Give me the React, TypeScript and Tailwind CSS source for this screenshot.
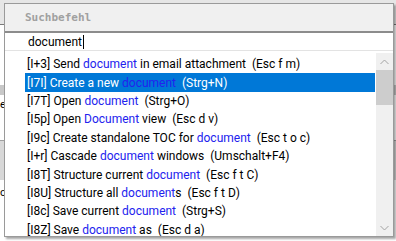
import React from 'react';

interface Item {
  code: string;
  parts: string[];
  keys: string;
}

// every odd index in parts is the highlighted match
const items: Item[] = [
  { code: '[I+3]', parts: ['Send ', 'document', ' in email attachment'], keys: '(Esc f m)' },
  { code: '[I7I]', parts: ['Create a new ', 'document', ''], keys: '(Strg+N)' },
  { code: '[I7T]', parts: ['Open ', 'document', ''], keys: '(Strg+O)' },
  { code: '[I5p]', parts: ['Open ', 'Document', ' view'], keys: '(Esc d v)' },
  { code: '[I9c]', parts: ['Create standalone TOC for ', 'document', ''], keys: '(Esc t o c)' },
  { code: '[I+r]', parts: ['Cascade ', 'document', ' windows'], keys: '(Umschalt+F4)' },
  { code: '[I8T]', parts: ['Structure current ', 'document', ''], keys: '(Esc f t C)' },
  { code: '[I8U]', parts: ['Structure all ', 'document', 's'], keys: '(Esc f t D)' },
  { code: '[I8c]', parts: ['Save current ', 'document', ''], keys: '(Strg+S)' },
  { code: '[I8Z]', parts: ['Save ', 'document', ' as'], keys: '(Esc d a)' },
];

const Row: React.FC<{ item: Item; selected: boolean }> = ({ item, selected }) => (
  <div className="h-[18.4px] shrink-0 pl-[20px] pr-[1px] flex">
    <div
      className={`flex-1 flex items-center pl-[2px] whitespace-pre leading-[16px] ${
        selected ? 'bg-[#0078d7] text-white' : 'text-black'
      }`}
    >
      <span>{item.code} </span>
      {item.parts.map((p, i) =>
        i % 2 === 1 ? (
          <span key={i} className="text-[#2222ee]">
            {p}
          </span>
        ) : (
          <span key={i}>{p}</span>
        )
      )}
      <span>{'  ' + item.keys}</span>
    </div>
  </div>
);

const Chevron: React.FC<{ up?: boolean }> = ({ up }) => (
  <svg width="9" height="6" viewBox="0 0 9 6" className="block">
    <path
      d={up ? 'M0.5 5 L4.5 1 L8.5 5' : 'M0.5 1 L4.5 5 L8.5 1'}
      fill="none"
      stroke="#a3a3a3"
      strokeWidth="1"
    />
  </svg>
);

export default function App() {
  return (
    <div className="relative w-[396px] h-[241px] overflow-hidden bg-[#f3f3f3] text-[12px] font-['Roboto',sans-serif]">
      {/* application behind the popup */}
      <div className="flex flex-col h-full">
        <div className="h-[25px] bg-[#e6e6e6] border-b border-[#7a7a7a]" />
        <div className="h-[60px] bg-white" />
        <div className="h-[10px] bg-[#c8c8c8]" />
        <div className="h-[45px] bg-white text-[11px] leading-[14px] pt-[3px]">e</div>
        <div className="h-[40px] bg-[#d8d8d8] border-t border-[#a0a0a0]" />
        <div className="flex-1 bg-white text-[11px] leading-[18px] pt-[4px] whitespace-pre">
          {'olumn>                         tm_page_lay'}
        </div>
      </div>

      {/* command search popup */}
      <div className="absolute left-[4px] top-[3px] w-[390px] h-[234px] bg-white border border-[#9a9a9a] shadow-[2px_2px_2px_rgba(0,0,0,0.35)] flex flex-col overflow-hidden">
        <div className="h-[29px] shrink-0 bg-[#f0f0f0] border-b-2 border-[#8c8c8c] flex items-center pl-[20px] pt-[1px]">
          <span className="font-['DejaVu_Sans_Mono',monospace] font-bold text-[11px] text-[#a0a0a0]">
            Suchbefehl
          </span>
        </div>
        <div className="h-[18px] shrink-0 border-b border-[#e3e3e3] flex items-end pl-[23px] leading-[16px]">
          <span className="text-black">document</span>
          <span className="w-px h-[14px] bg-black ml-px mb-px" />
        </div>
        <div className="flex-1 flex pt-[4px] min-h-0">
          <div className="flex-1 flex flex-col overflow-hidden">
            {items.map((item, i) => (
              <Row key={i} item={item} selected={i === 1} />
            ))}
          </div>
          <div className="w-[17px] bg-[#f0f0f0] flex flex-col -mt-[2px]">
            <div className="h-[17px] flex items-center justify-center">
              <Chevron up />
            </div>
            <div className="h-[35px] bg-[#cdcdcd]" />
            <div className="flex-1" />
            <div className="h-[17px] flex items-center justify-center">
              <Chevron />
            </div>
          </div>
        </div>
      </div>
    </div>
  );
}
